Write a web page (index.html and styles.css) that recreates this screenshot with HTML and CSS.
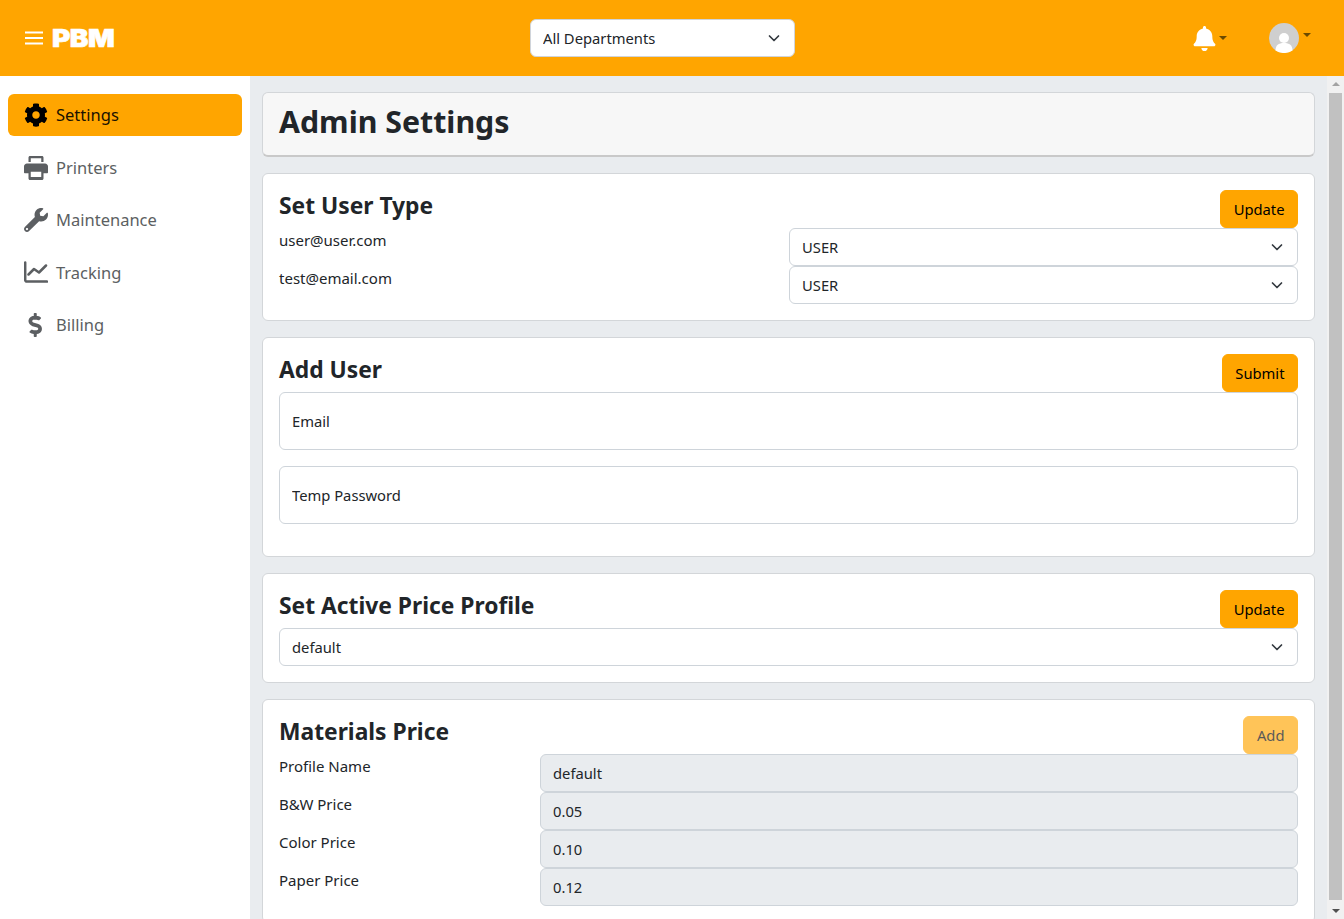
FILE: index.html
```html
<!DOCTYPE html>
<html lang="en">
<head>
<meta charset="utf-8">
<title>Admin Settings</title>
<link rel="stylesheet" href="styles.css">
</head>
<body>
<header class="topbar">
  <div class="brand">
    <svg class="burger" viewBox="0 0 18 14" aria-hidden="true"><path d="M0 1.5h18M0 7h18M0 12.5h18"/></svg>
    <span class="logo">PBM</span>
  </div>
  <div class="dept-wrap"><select class="select dept"><option>All Departments</option></select></div>
  <div class="top-actions">
    <button class="icon-btn bell-btn">
      <svg class="bell" viewBox="0 0 448 512" aria-hidden="true"><path d="M224 512c35.32 0 63.97-28.65 63.97-64H160.03c0 35.35 28.65 64 63.97 64zm215.39-149.71c-19.32-20.76-55.47-51.99-55.47-154.29 0-77.7-54.48-139.9-127.94-155.16V32c0-17.67-14.32-32-31.98-32s-31.98 14.33-31.98 32v20.84C118.56 68.1 64.08 130.3 64.08 208c0 102.3-36.15 133.53-55.47 154.29-6 6.45-8.66 14.16-8.61 21.71.11 16.4 12.98 32 32.1 32h383.8c19.12 0 32-15.6 32.1-32 .05-7.55-2.61-15.27-8.61-21.71z"/></svg>
      <span class="caret"></span>
    </button>
    <button class="icon-btn avatar-btn">
      <svg class="avatar" viewBox="0 0 30 30" aria-hidden="true"><circle class="avatar-bg" cx="15" cy="15" r="15"/><circle class="avatar-fg" cx="15" cy="15" r="5"/><path class="avatar-fg" d="M6.5 27.4c0-5 3-7.4 8.5-7.4s8.5 2.4 8.5 7.4a15 15 0 0 1-17 0z"/></svg>
      <span class="caret"></span>
    </button>
  </div>
</header>

<div class="shell">
  <nav class="sidebar">
    <a class="nav-item active"><svg class="nav-icon" viewBox="0 0 512 512" aria-hidden="true"><path d="M487.4 315.7l-42.6-24.6c4.3-23.2 4.3-47 0-70.2l42.6-24.6c4.9-2.8 7.1-8.6 5.5-14-11.1-35.6-30-67.8-54.7-94.6-3.8-4.1-10-5.1-14.8-2.3L380.8 110c-17.9-15.4-38.5-27.3-60.8-35.1V25.8c0-5.6-3.9-10.5-9.4-11.7-36.7-8.2-74.3-7.8-109.2 0-5.5 1.2-9.4 6.1-9.4 11.7V75c-22.2 7.9-42.8 19.8-60.8 35.1L88.7 85.5c-4.9-2.8-11-1.9-14.8 2.3-24.7 26.7-43.6 58.9-54.7 94.6-1.7 5.4.6 11.2 5.5 14L67.3 221c-4.3 23.2-4.3 47 0 70.2l-42.6 24.6c-4.9 2.8-7.1 8.6-5.5 14 11.1 35.6 30 67.8 54.7 94.6 3.8 4.1 10 5.1 14.8 2.3l42.6-24.6c17.9 15.4 38.5 27.3 60.8 35.1v49.2c0 5.6 3.9 10.5 9.4 11.7 36.7 8.2 74.3 7.8 109.2 0 5.5-1.2 9.4-6.1 9.4-11.7v-49.2c22.2-7.9 42.8-19.8 60.8-35.1l42.6 24.6c4.9 2.8 11 1.9 14.8-2.3 24.7-26.7 43.6-58.9 54.7-94.6 1.5-5.5-.7-11.3-5.6-14.1zM256 336c-44.1 0-80-35.9-80-80s35.9-80 80-80 80 35.9 80 80-35.9 80-80 80z"/></svg><span>Settings</span></a>
    <a class="nav-item"><svg class="nav-icon" viewBox="0 0 512 512" aria-hidden="true"><path d="M128 0C110 0 96 14 96 32v96h48V48h224v80h48V32c0-18-14-32-32-32zM64 160c-35 0-64 29-64 64v128c0 9 7 16 16 16h80v112c0 18 14 32 32 32h256c18 0 32-14 32-32V368h80c9 0 16-7 16-16V224c0-35-29-64-64-64zm80 176h224v112H144z" fill-rule="evenodd"/></svg><span>Printers</span></a>
    <a class="nav-item"><svg class="nav-icon" viewBox="0 0 512 512" aria-hidden="true"><path d="M507.73 109.1c-2.24-9.03-13.54-12.09-20.12-5.51l-74.36 74.36-67.88-11.31-11.31-67.88 74.36-74.36c6.62-6.62 3.43-17.9-5.66-20.16-47.38-11.74-99.55.91-136.58 37.93-39.64 39.64-50.55 97.1-34.05 147.2L18.74 402.76c-24.99 24.99-24.99 65.51 0 90.5 24.99 24.99 65.51 24.99 90.5 0l213.21-213.21c50.12 16.71 107.47 5.68 147.37-34.22 37.07-37.07 49.7-89.32 37.91-136.73zM64 472c-13.25 0-24-10.75-24-24 0-13.26 10.75-24 24-24s24 10.74 24 24c0 13.25-10.75 24-24 24z"/></svg><span>Maintenance</span></a>
    <a class="nav-item"><svg class="nav-icon nav-icon-line" viewBox="0 0 24 24" aria-hidden="true"><path d="M1.2 1.5V19a1.6 1.6 0 0 0 1.6 1.6h20.2M4.5 13.5 10 8l5 3.5 7-7"/></svg><span>Tracking</span></a>
    <a class="nav-item"><svg class="nav-icon" viewBox="-96 0 512 512" aria-hidden="true"><path d="M209.2 233.4l-108-31.6C88.7 198.2 80 186.5 80 173.5c0-16.3 13.2-29.5 29.5-29.5h66.3c12.2 0 24.2 3.7 34.2 10.5 6.1 4.1 14.3 3.1 19.5-2l34.8-34c7.1-6.9 6.1-18.4-1.8-24.5C238 74.8 207.4 64.1 176 64V16c0-8.8-7.2-16-16-16h-32c-8.8 0-16 7.2-16 16v48h-2.5C45.8 64-5.4 118.7.5 183.6c4.2 46.1 39.4 83.6 83.8 96.6l102.5 30c12.5 3.7 21.2 15.3 21.2 28.3 0 16.3-13.2 29.5-29.5 29.5h-66.3C100 368 88 364.3 78 357.5c-6.1-4.1-14.3-3.1-19.5 2l-34.8 34c-7.1 6.9-6.1 18.4 1.8 24.5 24.5 19.2 55.1 29.9 86.5 30v48c0 8.8 7.2 16 16 16h32c8.8 0 16-7.2 16-16v-48.2c46.6-.9 90.3-28.6 105.7-72.7 21.5-61.6-14.6-124.8-72.5-141.7z"/></svg><span>Billing</span></a>
  </nav>

  <main class="content">
    <section class="card title-card"><h1>Admin Settings</h1></section>

    <section class="card">
      <div class="card-head"><h2>Set User Type</h2><button class="btn">Update</button></div>
      <div class="row split-half"><span>user@user.com</span><select class="select"><option>USER</option></select></div>
      <div class="row split-half"><span>test@email.com</span><select class="select"><option>USER</option></select></div>
    </section>

    <section class="card card-form">
      <div class="card-head"><h2>Add User</h2><button class="btn">Submit</button></div>
      <input class="input" type="text" placeholder="Email">
      <input class="input" type="text" placeholder="Temp Password">
    </section>

    <section class="card">
      <div class="card-head"><h2>Set Active Price Profile</h2><button class="btn">Update</button></div>
      <select class="select"><option>default</option></select>
    </section>

    <section class="card">
      <div class="card-head"><h2>Materials Price</h2><button class="btn" disabled>Add</button></div>
      <div class="row split-quarter"><span>Profile Name</span><input class="field" type="text" value="default" disabled></div>
      <div class="row split-quarter"><span>B&amp;W Price</span><input class="field" type="text" value="0.05" disabled></div>
      <div class="row split-quarter"><span>Color Price</span><input class="field" type="text" value="0.10" disabled></div>
      <div class="row split-quarter"><span>Paper Price</span><input class="field" type="text" value="0.12" disabled></div>
    </section>
  </main>

  <div class="scrollbar" aria-hidden="true">
    <span class="arrow arrow-up"></span>
    <span class="thumb"></span>
    <span class="arrow arrow-down"></span>
  </div>
</div>
</body>
</html>
```

FILE: styles.css
```css
* { box-sizing: border-box; }
html, body { height: 100%; }
body {
  margin: 0;
  height: 919px;
  overflow: hidden;
  display: flex;
  flex-direction: column;
  background: #e9ecef;
  color: #212529;
  font-family: "Noto Sans", "Open Sans", sans-serif;
  font-size: 14.75px;
  line-height: 22px;
}

.topbar {
  flex: 0 0 76px;
  display: grid;
  grid-template-columns: 505px 265px 1fr;
  align-items: center;
  padding: 0 33px 0 25px;
  background: #ffa500;
}
.brand { display: flex; align-items: center; gap: 9px; }
.burger { width: 18px; height: 14px; fill: none; stroke: #fff; stroke-width: 2; }
.logo {
  color: #fff;
  font-family: "Inter", sans-serif;
  font-weight: 900;
  font-size: 25px;
  line-height: 24px;
  letter-spacing: -0.5px;
  -webkit-text-stroke: 0.6px #fff;
  transform: scaleX(1.12);
  transform-origin: left center;
}
.top-actions { display: flex; justify-content: flex-end; align-items: center; gap: 42px; }
.icon-btn { display: flex; align-items: flex-start; gap: 3px; padding: 0; border: 0; background: none; }
.bell { width: 23px; height: 25px; fill: #fff; }
.avatar { width: 30px; height: 30px; }
.avatar-bg { fill: #cfcfcf; }
.avatar-fg { fill: #fff; }
.avatar-btn { gap: 4px; }
.caret {
  width: 0; height: 0;
  margin-top: 10px;
  border-left: 4px solid transparent;
  border-right: 4px solid transparent;
  border-top: 4px solid #6b4a00;
}

.shell { flex: 1; display: flex; min-height: 0; }
.sidebar {
  flex: 0 0 250px;
  display: flex;
  flex-direction: column;
  gap: 10.5px;
  padding: 18px 8px 0;
  background: #fff;
}
.nav-item {
  display: flex;
  align-items: center;
  gap: 8px;
  height: 42px;
  padding: 0 16px;
  border-radius: 6px;
  color: #5c5f62;
  font-size: 16.5px;
}
.nav-item.active { background: #ffa500; color: #1a1200; }
.nav-icon { flex: 0 0 24px; width: 24px; height: 24px; fill: #5c5f62; }
.nav-icon-line { fill: none; stroke: #5c5f62; stroke-width: 2.5; stroke-linejoin: round; stroke-linecap: round; }
.active .nav-icon { fill: #000; }

.content {
  flex: 1;
  min-width: 0;
  display: flex;
  flex-direction: column;
  gap: 16px;
  padding: 16px 12px 0;
}
.card {
  flex: none;
  padding: 16px;
  background: #fff;
  border: 1px solid #d3d6d9;
  border-radius: 6px;
}
.title-card {
  height: 65px;
  padding: 0 16px;
  display: flex;
  align-items: center;
  background: #f7f7f7;
  border-bottom: 2px solid #c9c9c9;
}
h1 { margin: 0; padding-bottom: 4px; font-size: 30.3px; line-height: 38px; font-weight: 700; }
h2 { margin: 0; padding-top: 1px; font-size: 22.8px; line-height: 30px; font-weight: 700; }
.card-head { display: flex; justify-content: space-between; align-items: flex-start; height: 38px; }

.btn {
  height: 38px;
  padding: 0 12.5px;
  border: 1px solid #ffa500;
  border-radius: 6px;
  background: #ffa500;
  color: #000;
  font: inherit;
}
.btn:disabled { opacity: .65; }

.row { display: grid; height: 38px; }
.split-half { grid-template-columns: 1fr 509px; }
.split-quarter { grid-template-columns: 1fr 758px; }
.row span { padding-top: 1px; font-size: 15px; }

.select, .input, .field {
  display: block;
  width: 100%;
  height: 38px;
  padding: 0 12px;
  border: 1px solid #ced4da;
  border-radius: 6px;
  background-color: #fff;
  color: #212529;
  font: inherit;
  outline: 0;
}
.select {
  appearance: none;
  background-image: url("data:image/svg+xml,%3csvg xmlns='http://www.w3.org/2000/svg' viewBox='0 0 16 16'%3e%3cpath fill='none' stroke='%23343a40' stroke-linecap='round' stroke-linejoin='round' stroke-width='1.7' d='M3.5 6l4.5 4.5L12.500 6'/%3e%3c/svg%3e");
  background-repeat: no-repeat;
  background-position: right 12px center;
  background-size: 16px 16px;
}
.input { height: 58px; margin-bottom: 16px; }
.input::placeholder { color: #212529; opacity: 1; }
.field { background-color: #e9ecef; opacity: 1; }

.dept { border-color: #d0d4da; }

.scrollbar {
  flex: 0 0 17px;
  display: flex;
  flex-direction: column;
  align-items: center;
  background: #f1f1f1;
}
.thumb { flex: 1; width: 13px; background: #c1c1c1; }
.arrow { width: 0; height: 0; border-left: 4px solid transparent; border-right: 4px solid transparent; }
.arrow-up { border-bottom: 4px solid #a3a3a3; border-top: 6px solid transparent; margin-bottom: 7px; }
.arrow-down { border-top: 4px solid #505050; border-bottom: 6px solid transparent; margin-top: 9px; }
```
